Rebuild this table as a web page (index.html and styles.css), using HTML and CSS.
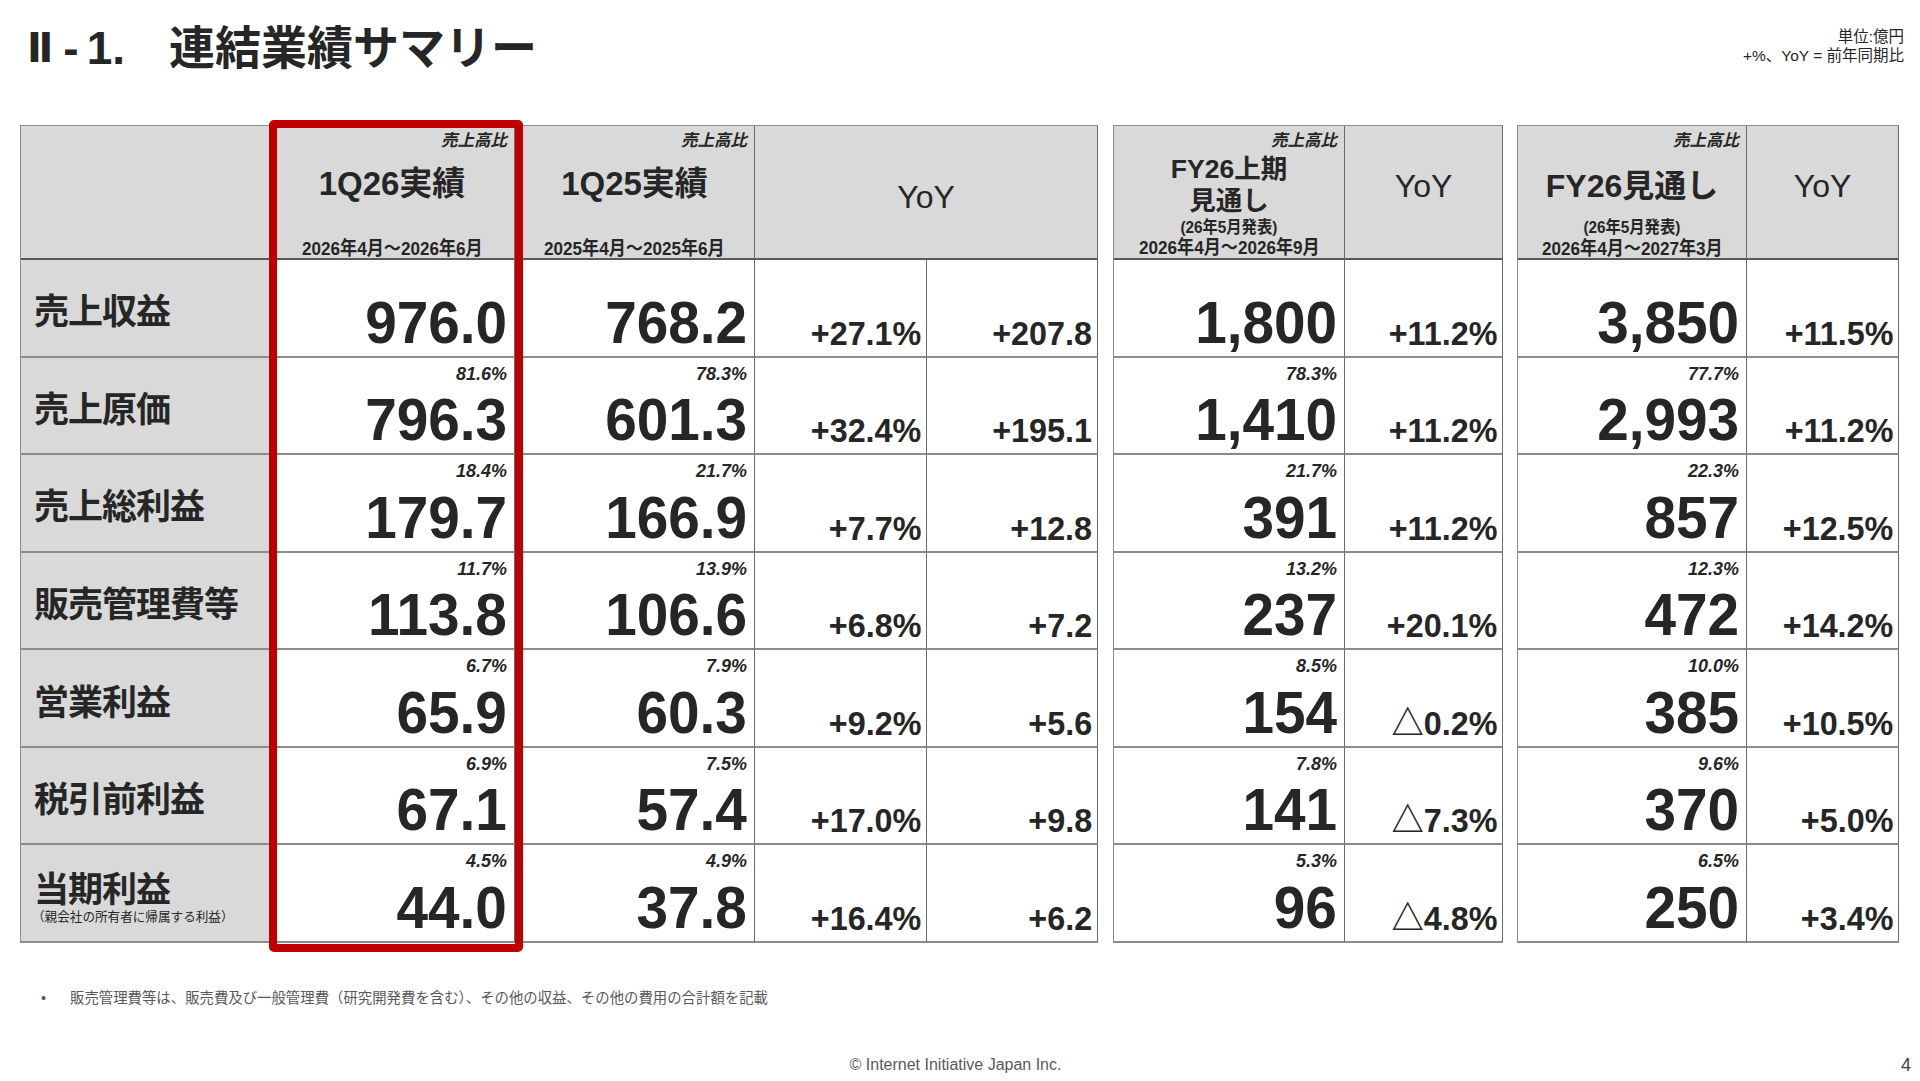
FILE: index.html
```html
<!DOCTYPE html>
<html lang="ja">
<head>
<meta charset="utf-8">
<title>連結業績サマリー</title>
<link rel="stylesheet" href="styles.css">
</head>
<body>
<div class="slide">
  <header class="top">
    <h1 class="title"><span class="pre"><span class="r2">Ⅱ</span><span class="dash">-</span><span class="one">1.</span></span><span class="jp">連結業績サマリー</span></h1>
    <div class="unit">
      <div>単位:億円</div>
      <div>+%、YoY = 前年同期比</div>
    </div>
  </header>

  <div class="tables">
    <div class="tbl t1">
      <div class="c h lab-h"></div>
      <div class="c h hq">
        <div class="cap"><span>売上高比</span></div>
        <div class="hmain">1Q26実績</div>
        <div class="hdate"><span>2026年4月～2026年6月</span></div>
      </div>
      <div class="c h hq">
        <div class="cap"><span>売上高比</span></div>
        <div class="hmain">1Q25実績</div>
        <div class="hdate"><span>2025年4月～2025年6月</span></div>
      </div>
      <div class="c h hyoy span2">YoY</div>

      <div class="c lab">売上収益</div>
      <div class="c v first"><span class="big">976.0</span></div>
      <div class="c v first"><span class="big">768.2</span></div>
      <div class="c y"><span class="yv">+27.1%</span></div>
      <div class="c y"><span class="yv">+207.8</span></div>

      <div class="c lab">売上原価</div>
      <div class="c v"><span class="pct">81.6%</span><span class="big">796.3</span></div>
      <div class="c v"><span class="pct">78.3%</span><span class="big">601.3</span></div>
      <div class="c y"><span class="yv">+32.4%</span></div>
      <div class="c y"><span class="yv">+195.1</span></div>

      <div class="c lab">売上総利益</div>
      <div class="c v"><span class="pct">18.4%</span><span class="big">179.7</span></div>
      <div class="c v"><span class="pct">21.7%</span><span class="big">166.9</span></div>
      <div class="c y"><span class="yv">+7.7%</span></div>
      <div class="c y"><span class="yv">+12.8</span></div>

      <div class="c lab">販売管理費等</div>
      <div class="c v"><span class="pct">11.7%</span><span class="big">113.8</span></div>
      <div class="c v"><span class="pct">13.9%</span><span class="big">106.6</span></div>
      <div class="c y"><span class="yv">+6.8%</span></div>
      <div class="c y"><span class="yv">+7.2</span></div>

      <div class="c lab">営業利益</div>
      <div class="c v"><span class="pct">6.7%</span><span class="big">65.9</span></div>
      <div class="c v"><span class="pct">7.9%</span><span class="big">60.3</span></div>
      <div class="c y"><span class="yv">+9.2%</span></div>
      <div class="c y"><span class="yv">+5.6</span></div>

      <div class="c lab">税引前利益</div>
      <div class="c v"><span class="pct">6.9%</span><span class="big">67.1</span></div>
      <div class="c v"><span class="pct">7.5%</span><span class="big">57.4</span></div>
      <div class="c y"><span class="yv">+17.0%</span></div>
      <div class="c y"><span class="yv">+9.8</span></div>

      <div class="c lab lab2"><span class="lmain">当期利益</span><span class="lsub">（親会社の所有者に帰属する利益）</span></div>
      <div class="c v"><span class="pct">4.5%</span><span class="big">44.0</span></div>
      <div class="c v"><span class="pct">4.9%</span><span class="big">37.8</span></div>
      <div class="c y"><span class="yv">+16.4%</span></div>
      <div class="c y"><span class="yv">+6.2</span></div>
    </div>

    <div class="tbl t2">
      <div class="c h hf">
        <div class="cap"><span>売上高比</span></div>
        <div class="hl1">FY26上期</div>
        <div class="hl2">見通し</div>
        <div class="hann"><span>(26年5月発表)</span></div>
        <div class="hdate"><span>2026年4月～2026年9月</span></div>
      </div>
      <div class="c h hyoy2">YoY</div>

      <div class="c v first"><span class="big">1,800</span></div>
      <div class="c y"><span class="yv">+11.2%</span></div>
      <div class="c v"><span class="pct">78.3%</span><span class="big">1,410</span></div>
      <div class="c y"><span class="yv">+11.2%</span></div>
      <div class="c v"><span class="pct">21.7%</span><span class="big">391</span></div>
      <div class="c y"><span class="yv">+11.2%</span></div>
      <div class="c v"><span class="pct">13.2%</span><span class="big">237</span></div>
      <div class="c y"><span class="yv">+20.1%</span></div>
      <div class="c v"><span class="pct">8.5%</span><span class="big">154</span></div>
      <div class="c y"><span class="yv tri">△0.2%</span></div>
      <div class="c v"><span class="pct">7.8%</span><span class="big">141</span></div>
      <div class="c y"><span class="yv tri">△7.3%</span></div>
      <div class="c v"><span class="pct">5.3%</span><span class="big">96</span></div>
      <div class="c y"><span class="yv tri">△4.8%</span></div>
    </div>

    <div class="tbl t3">
      <div class="c h hf3">
        <div class="cap"><span>売上高比</span></div>
        <div class="hmain3">FY26見通し</div>
        <div class="hann"><span>(26年5月発表)</span></div>
        <div class="hdate"><span>2026年4月～2027年3月</span></div>
      </div>
      <div class="c h hyoy2">YoY</div>

      <div class="c v first"><span class="big">3,850</span></div>
      <div class="c y"><span class="yv">+11.5%</span></div>
      <div class="c v"><span class="pct">77.7%</span><span class="big">2,993</span></div>
      <div class="c y"><span class="yv">+11.2%</span></div>
      <div class="c v"><span class="pct">22.3%</span><span class="big">857</span></div>
      <div class="c y"><span class="yv">+12.5%</span></div>
      <div class="c v"><span class="pct">12.3%</span><span class="big">472</span></div>
      <div class="c y"><span class="yv">+14.2%</span></div>
      <div class="c v"><span class="pct">10.0%</span><span class="big">385</span></div>
      <div class="c y"><span class="yv">+10.5%</span></div>
      <div class="c v"><span class="pct">9.6%</span><span class="big">370</span></div>
      <div class="c y"><span class="yv">+5.0%</span></div>
      <div class="c v"><span class="pct">6.5%</span><span class="big">250</span></div>
      <div class="c y"><span class="yv">+3.4%</span></div>
    </div>

    <div class="highlight"></div>
  </div>

  <p class="note"><span class="bullet">•</span><span>販売管理費等は、販売費及び一般管理費（研究開発費を含む）、その他の収益、その他の費用の合計額を記載</span></p>

  <footer class="foot">
    <span></span>
    <span class="copy">© Internet Initiative Japan Inc.</span>
    <span class="page">4</span>
  </footer>
</div>
</body>
</html>
```

FILE: styles.css
```css
html, body {
  margin: 0;
  padding: 0;
  background: #ffffff;
}

.slide {
  width: 1920px;
  height: 1081px;
  overflow: hidden;
  font-family: "Liberation Sans", "Noto Sans CJK JP", sans-serif;
  color: #262626;
}

/* ---------- heading ---------- */
.top {
  height: 125px;
  display: flex;
  justify-content: space-between;
  align-items: flex-start;
  padding: 0 16px 0 27px;
  box-sizing: border-box;
}

.title {
  margin: 22px 0 0 0;
  font-size: 46px;
  line-height: 52px;
  font-weight: 700;
  display: flex;
  white-space: nowrap;
}

.title .pre {
  display: flex;
  width: 142px;
}

.r2 {
  font-family: "DejaVu Sans", sans-serif;
  font-size: 40px;
}

.dash {
  margin-left: 10px;
}

.one {
  margin-left: 8px;
}

.unit {
  margin-top: 27px;
  text-align: right;
  font-size: 15.5px;
  line-height: 19px;
  color: #262626;
}

/* ---------- tables ---------- */
.tables {
  position: relative;
  display: flex;
  margin-left: 20px;
  height: 818px;
}

.tbl {
  display: grid;
  box-sizing: border-box;
  height: 818px;
  border-top: 1px solid #8c8c8c;
  border-left: 1px solid #8c8c8c;
  grid-template-rows: 134px repeat(7, 1fr);
}

.t1 {
  width: 1078px;
  grid-template-columns: 249px 245px 240px 172px 1fr;
}

.t2 {
  width: 390px;
  margin-left: 15px;
  grid-template-columns: 231px 1fr;
}

.t3 {
  width: 382px;
  margin-left: 14px;
  grid-template-columns: 229px 1fr;
}

.c {
  box-sizing: border-box;
  min-width: 0;
  border-right: 1px solid #6b6b6b;
  border-bottom: 2px solid #8c8c8c;
}

.h {
  background: #d9d9d9;
  border-bottom: 2px solid #595959;
}

.span2 {
  grid-column: span 2;
}

/* header cells */
.hq, .hf, .hf3 {
  display: flex;
  flex-direction: column;
  padding: 4px 7px 3px 7px;
  font-weight: 700;
}

.cap {
  height: 20px;
  line-height: 20px;
  text-align: right;
  font-size: 16.5px;
  font-style: italic;
}

.hmain {
  flex: 1;
  display: flex;
  align-items: center;
  justify-content: center;
  padding-bottom: 28px;
  font-size: 33px;
}

.hdate, .hann {
  text-align: center;
  line-height: 20px;
  height: 20px;
  white-space: nowrap;
}

.hq .hdate, .hf3 .hdate {
  margin-bottom: -4px;
}

.hdate span {
  display: inline-block;
  font-size: 19px;
  transform: scaleX(0.9);
}

.hann span {
  display: inline-block;
  font-size: 17px;
  transform: scaleX(0.9);
}

.hl1, .hl2 {
  text-align: center;
  font-size: 26.5px;
  line-height: 32px;
  height: 32px;
}

.hl1 {
  margin-top: 3px;
}

.hann {
  margin-top: 1px;
}

.hf .hdate {
  margin-top: 0;
}

.hmain3 {
  flex: 1;
  display: flex;
  align-items: center;
  justify-content: center;
  padding-bottom: 2px;
  font-size: 32px;
}

.hf3 .hann {
  margin-bottom: 1px;
}

.hyoy {
  display: flex;
  align-items: center;
  justify-content: center;
  padding-top: 11px;
  font-size: 32px;
  font-weight: 400;
}

.hyoy2 {
  display: flex;
  align-items: center;
  justify-content: center;
  padding-bottom: 11px;
  font-size: 32px;
  font-weight: 400;
}

/* row labels */
.lab {
  background: #d9d9d9;
  display: flex;
  align-items: center;
  padding-left: 13px;
  padding-top: 2px;
  font-size: 35px;
  font-weight: 700;
  letter-spacing: -1px;
  white-space: nowrap;
}

.lab2 {
  flex-direction: column;
  align-items: flex-start;
  justify-content: center;
  padding-top: 10px;
}

.lmain {
  line-height: 38px;
}

.lsub {
  font-size: 12.6px;
  line-height: 16px;
  font-weight: 400;
  letter-spacing: 0;
  margin-left: -2px;
}

/* values */
.v {
  display: flex;
  flex-direction: column;
  align-items: flex-end;
  justify-content: space-between;
  padding: 6px 7px 3px 0;
}

.v.first {
  justify-content: flex-end;
}

.pct {
  display: inline-block;
  font-size: 18px;
  line-height: 20px;
  font-weight: 700;
  font-style: italic;
}

.big {
  display: inline-block;
  font-size: 60px;
  line-height: 60px;
  font-weight: 700;
  transform: scaleX(0.945);
  transform-origin: right bottom;
}

.y {
  display: flex;
  align-items: flex-end;
  justify-content: flex-end;
  padding: 0 5px 6px 0;
}

.yv {
  display: inline-block;
  font-size: 34px;
  line-height: 34px;
  font-weight: 700;
  transform: scaleX(0.95);
  transform-origin: right bottom;
  white-space: nowrap;
}

/* highlight frame over the current-quarter column */
.highlight {
  position: absolute;
  left: 249px;
  top: -5px;
  width: 254px;
  height: 832px;
  box-sizing: border-box;
  border: 8px solid #c00000;
  border-radius: 5px;
  pointer-events: none;
}

/* ---------- footnote ---------- */
.note {
  margin: 45px 0 0 0;
  padding-left: 41px;
  display: flex;
  font-size: 14.4px;
  line-height: 20px;
  color: #595959;
}

.bullet {
  width: 29px;
}

/* ---------- footer ---------- */
.foot {
  margin-top: 47px;
  display: grid;
  grid-template-columns: 1fr auto 1fr;
  align-items: center;
  line-height: 20px;
  color: #595959;
  padding-right: 9px;
}

.copy {
  font-size: 16px;
}

.page {
  justify-self: end;
  font-size: 18px;
  color: #404040;
}
```
